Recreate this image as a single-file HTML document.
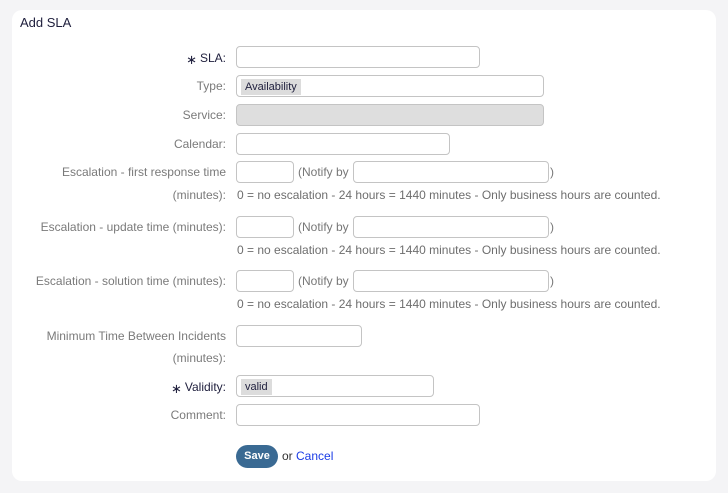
<!DOCTYPE html>
<html><head><style>
body{margin:0;width:728px;height:493px;background:#f4f4f6;font-family:"Liberation Sans",Arial,sans-serif;font-size:12px;position:relative;overflow:hidden}
.card{position:absolute;left:12px;top:10px;width:704px;height:471px;background:#fff;border-radius:10px}
.a{position:absolute;white-space:nowrap}
.l{position:absolute;right:502px;color:#7a7a7a;white-space:nowrap;text-align:right}
.r{color:#1e1e3c}
.in{position:absolute;border:1px solid #c4c4c4;border-radius:4px;background:#fff;box-sizing:border-box;height:22px}
.h{position:absolute;left:237px;color:#6e6e6e;white-space:nowrap}
.tag{position:absolute;background:#dcdcdc;color:#1e1e3c;font-size:11px;padding:1px 4px;top:3px;left:4px;line-height:14px}
.t{position:absolute;color:#777;white-space:nowrap}
.st{font-size:13px;position:relative;top:2px;margin-right:3px}
</style></head><body>
<div class="card"></div>
<div class="a" style="left:20px;top:15px;font-size:13px;color:#1e1e3c">Add SLA</div>

<div class="l r" style="top:50px"><span class="st">∗</span>SLA:</div>
<div class="in" style="left:236px;top:46px;width:244px"></div>

<div class="l" style="top:79px">Type:</div>
<div class="in" style="left:236px;top:75px;width:308px"><span class="tag">Availability</span></div>

<div class="l" style="top:108px">Service:</div>
<div class="in" style="left:236px;top:104px;width:308px;background:#dedede"></div>

<div class="l" style="top:137px">Calendar:</div>
<div class="in" style="left:236px;top:133px;width:214px"></div>

<div class="l" style="top:165px">Escalation - first response time</div>
<div class="l" style="top:188px">(minutes):</div>
<div class="in" style="left:236px;top:161px;width:58px"></div>
<div class="t" style="left:298px;top:165px">(Notify by</div>
<div class="in" style="left:353px;top:161px;width:196px"></div>
<div class="t" style="left:550px;top:165px">)</div>
<div class="h" style="top:188px">0 = no escalation - 24 hours = 1440 minutes - Only business hours are counted.</div>

<div class="l" style="top:220px">Escalation - update time (minutes):</div>
<div class="in" style="left:236px;top:216px;width:58px"></div>
<div class="t" style="left:298px;top:220px">(Notify by</div>
<div class="in" style="left:353px;top:216px;width:196px"></div>
<div class="t" style="left:550px;top:220px">)</div>
<div class="h" style="top:243px">0 = no escalation - 24 hours = 1440 minutes - Only business hours are counted.</div>

<div class="l" style="top:274px">Escalation - solution time (minutes):</div>
<div class="in" style="left:236px;top:270px;width:58px"></div>
<div class="t" style="left:298px;top:274px">(Notify by</div>
<div class="in" style="left:353px;top:270px;width:196px"></div>
<div class="t" style="left:550px;top:274px">)</div>
<div class="h" style="top:297px">0 = no escalation - 24 hours = 1440 minutes - Only business hours are counted.</div>

<div class="l" style="top:329px">Minimum Time Between Incidents</div>
<div class="l" style="top:351px">(minutes):</div>
<div class="in" style="left:236px;top:325px;width:126px"></div>

<div class="l r" style="top:379px"><span class="st">∗</span>Validity:</div>
<div class="in" style="left:236px;top:375px;width:198px"><span class="tag">valid</span></div>

<div class="l" style="top:408px">Comment:</div>
<div class="in" style="left:236px;top:404px;width:244px"></div>

<div class="a" style="left:236px;top:445px;width:42px;height:23px;border-radius:12px;background:#3a6a93;color:#fff;font-weight:bold;font-size:11px;text-align:center;line-height:23px">Save</div>
<div class="a" style="left:282px;top:449px;color:#333">or <span style="color:#1a3ce6">Cancel</span></div>
</body></html>
